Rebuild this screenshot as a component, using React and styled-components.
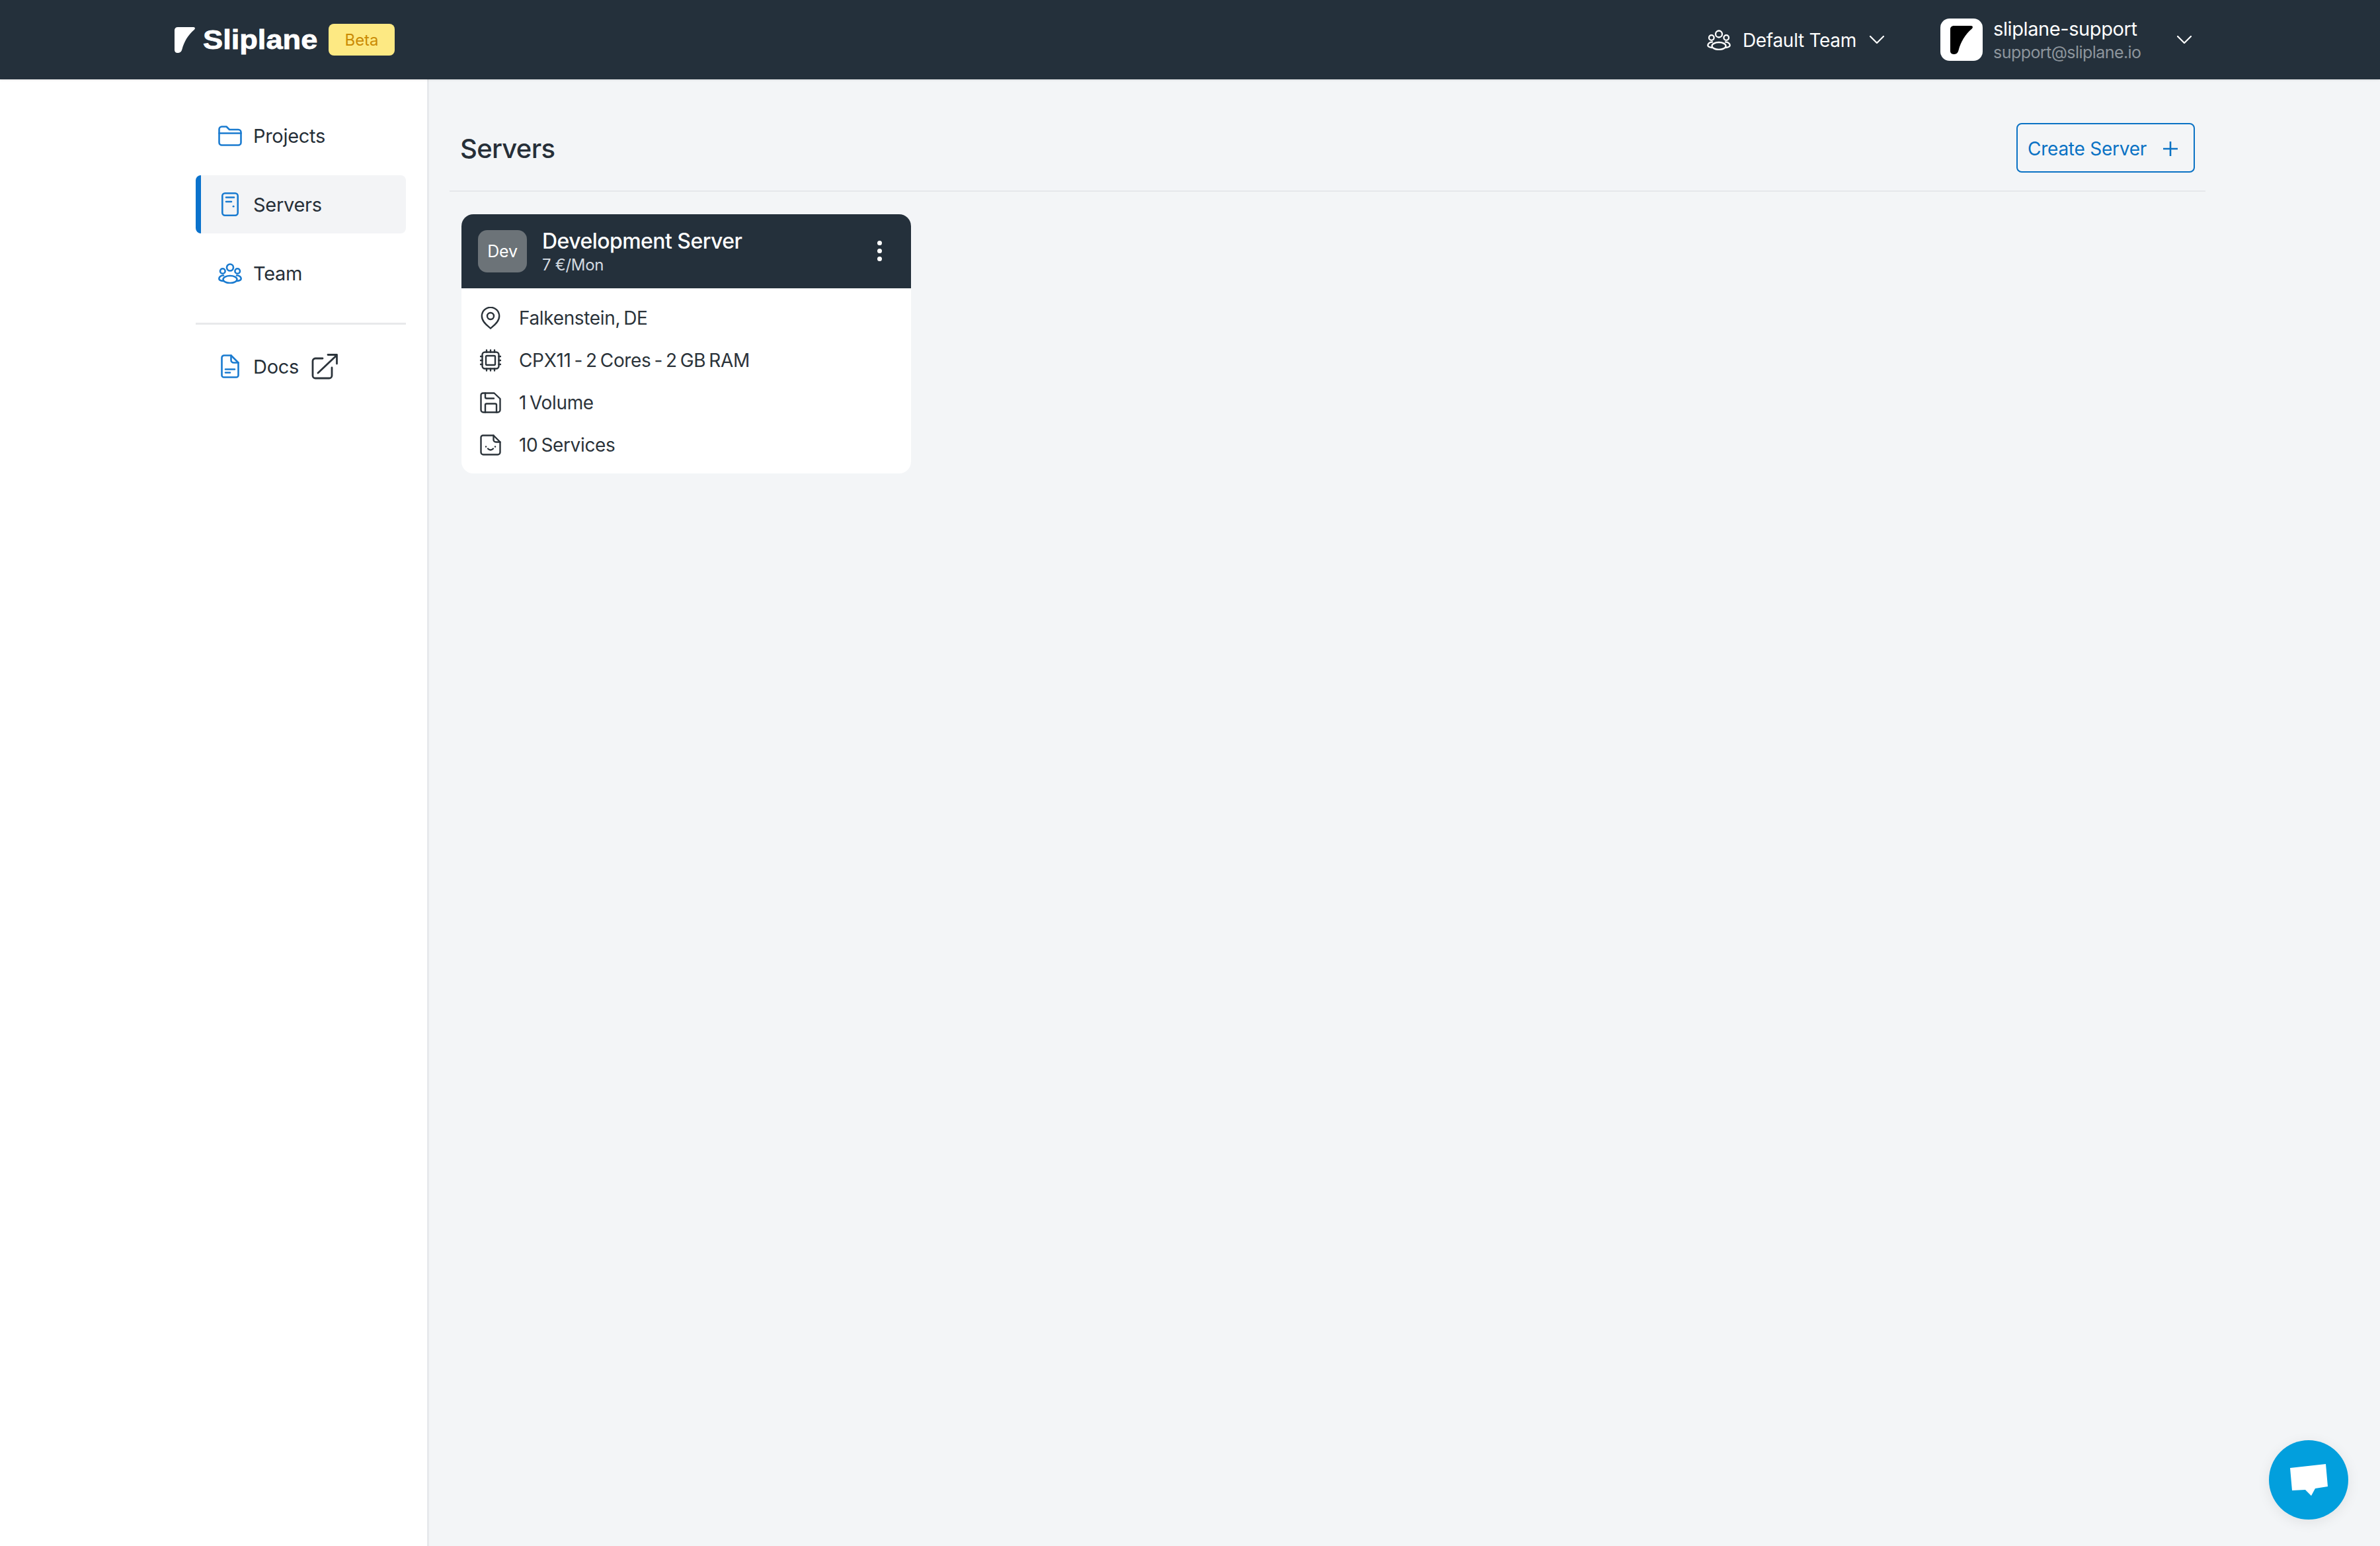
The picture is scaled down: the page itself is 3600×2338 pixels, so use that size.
import React from "react";
import styled, { createGlobalStyle } from "styled-components";

const Global = createGlobalStyle`
  html, body { margin: 0; padding: 0; background: #fff; }
  body { font-family: Inter, "Noto Sans", sans-serif; color: #262f38; }
  * { box-sizing: border-box; }
`;

const Page = styled.div`
  width: 3600px;
  height: 2338px;
  display: flex;
  flex-direction: column;
  overflow: hidden;
  position: relative;
`;

const TopBar = styled.header`
  height: 120px;
  flex: none;
  background: #24303b;
  display: flex;
  align-items: center;
  justify-content: space-between;
  padding: 0 285px 0 264px;
  box-shadow: 0 1px 3px rgba(0, 0, 0, 0.12);
  position: relative;
  z-index: 1;
`;

const Brand = styled.div`
  display: flex;
  align-items: center;
`;

const Wordmark = styled.span`
  margin-left: 12px;
  font-family: "Liberation Sans", Arial, sans-serif;
  font-weight: 700;
  font-size: 40px;
  line-height: 1;
  color: #fff;
  -webkit-text-stroke: 0.8px #fff;
  display: inline-block;
  width: 174px;
  white-space: nowrap;
  transform-origin: left center;
  transform: scaleX(1.13);
`;

const BetaBadge = styled.span`
  margin-left: 16px;
  width: 100px;
  height: 48px;
  border-radius: 8px;
  background: #fde983;
  color: #ca8a04;
  font-size: 24px;
  display: flex;
  align-items: center;
  justify-content: center;
`;

const TopRight = styled.div`
  display: flex;
  align-items: center;
`;

const TeamPicker = styled.div`
  display: flex;
  align-items: center;
  color: #fff;
  font-size: 28px;
  letter-spacing: -0.3px;
`;

const TeamName = styled.span`
  margin: 2px 20px 0 18px;
`;

const Account = styled.div`
  margin-left: 85px;
  display: flex;
  align-items: center;
`;

const AccountAvatar = styled.div`
  width: 64px;
  height: 64px;
  border-radius: 14px;
  background: #fff;
  display: flex;
  align-items: center;
  justify-content: center;
`;

const AccountText = styled.div`
  margin-left: 16px;
  width: 278px;
  display: flex;
  flex-direction: column;
  gap: 3px;
`;

const AccountName = styled.span`
  color: #fff;
  font-size: 29px;
  line-height: 34px;
  letter-spacing: -0.4px;
`;

const AccountMail = styled.span`
  color: #8d959c;
  font-size: 25px;
  line-height: 28px;
  letter-spacing: -0.55px;
  margin-top: 1px;
`;

const Body = styled.div`
  flex: 1;
  display: flex;
  min-height: 0;
`;

const Sidebar = styled.aside`
  width: 649px;
  flex: none;
  background: #fff;
  border-right: 3px solid #e7e9ec;
  padding: 41px 32px 0 296px;
  display: flex;
  flex-direction: column;
`;

const NavItem = styled.div`
  height: 88px;
  margin-bottom: 16px;
  display: flex;
  align-items: center;
  font-size: 29px;
  letter-spacing: -0.3px;
  border-radius: 8px;
  color: #262f38;
  background: ${(p) => (p.$active ? "#f3f4f6" : "transparent")};
  border-left: 8px solid ${(p) => (p.$active ? "#0a72cc" : "transparent")};
`;

const NavIconSlot = styled.span`
  width: 79px;
  padding-left: 26px;
  flex: none;
  display: flex;
  align-items: center;
  justify-content: flex-start;
`;

const NavIcon = styled.svg`
  width: ${(p) => p.$w}px;
  height: ${(p) => p.$h}px;
  margin-left: ${(p) => p.$ml || 0}px;
  fill: none;
  stroke: #1a7bd0;
  stroke-width: 2.6;
  stroke-linecap: round;
  stroke-linejoin: round;
  flex: none;
`;

const NavRule = styled.div`
  height: 3px;
  background: #e8e9eb;
  margin: 15px 0 19px;
`;

const ExternalIcon = styled.svg`
  width: 40px;
  height: 39px;
  margin-left: 19px;
  fill: none;
  stroke: #2c343b;
  stroke-width: 2.8;
  stroke-linecap: round;
  stroke-linejoin: round;
`;

const Main = styled.main`
  flex: 1;
  background: #f3f5f7;
  padding: 66px 264px 0 31px;
`;

const PageHead = styled.div`
  display: flex;
  align-items: center;
  justify-content: space-between;
  padding: 0 16px 27px;
  border-bottom: 2px solid #e5e7eb;
`;

const PageTitle = styled.h1`
  margin: 2px 0 0;
  font-size: 40px;
  font-weight: 500;
  letter-spacing: -0.7px;
  color: #262f38;
`;

const CreateButton = styled.button`
  width: 270px;
  height: 75px;
  padding: 2px 24px 0 15px;
  border: 2px solid #0a72c4;
  border-radius: 8px;
  background: transparent;
  color: #0a72c4;
  font-family: inherit;
  font-size: 28px;
  letter-spacing: -0.25px;
  display: flex;
  align-items: center;
  justify-content: space-between;
`;

const PlusIcon = styled.svg`
  width: 22px;
  height: 22px;
  stroke: #0a72c4;
  stroke-width: 2.6;
  fill: none;
`;

const Card = styled.article`
  width: 680px;
  margin: 34px 0 0 18px;
  border-radius: 18px;
  background: #fff;
  overflow: hidden;
`;

const CardHead = styled.div`
  height: 112px;
  background: #24303b;
  display: flex;
  align-items: center;
  padding: 0 44px 0 25px;
`;

const CardBadge = styled.div`
  width: 74px;
  height: 64px;
  border-radius: 14px;
  background: #6c7378;
  color: #fff;
  font-size: 25px;
  letter-spacing: -0.3px;
  display: flex;
  align-items: center;
  justify-content: center;
  flex: none;
`;

const CardHeading = styled.div`
  margin-left: 23px;
  flex: 1;
  display: flex;
  flex-direction: column;
`;

const CardTitle = styled.span`
  color: #fff;
  font-size: 32px;
  font-weight: 500;
  line-height: 40px;
  letter-spacing: -0.55px;
`;

const CardPrice = styled.span`
  color: #d3dae0;
  font-size: 24px;
  line-height: 30px;
  margin-top: 1px;
  letter-spacing: -0.3px;
`;

const KebabDots = styled.div`
  display: flex;
  flex-direction: column;
  gap: 5px;
  margin-top: -2px;
`;

const Dot = styled.span`
  width: 7px;
  height: 7px;
  border-radius: 50%;
  background: #fff;
`;

const CardBody = styled.div`
  padding: 13px 28px 11px;
  display: flex;
  flex-direction: column;
`;

const SpecRow = styled.div`
  height: 64px;
  display: flex;
  align-items: center;
  font-size: 28px;
  letter-spacing: -0.35px;
  word-spacing: -2.5px;
  color: #2b333a;
`;

const SpecIconSlot = styled.span`
  width: 59px;
  flex: none;
  display: flex;
  align-items: center;
`;

const SpecIcon = styled.svg`
  width: 32px;
  height: 34px;
  fill: none;
  stroke: #2b333a;
  stroke-width: 2.4;
  stroke-linecap: round;
  stroke-linejoin: round;
`;

const ChatBubble = styled.button`
  position: absolute;
  right: 48px;
  bottom: 40px;
  width: 120px;
  height: 120px;
  padding: 0;
  border: none;
  border-radius: 50%;
  background: #029fdd;
  box-shadow: 0 4px 20px rgba(0, 0, 0, 0.08);
  display: flex;
  align-items: center;
  justify-content: center;
`;

const Chevron = ({ ml }) => (
  <svg width="22" height="12" viewBox="0 0 22 12" fill="none" stroke="#fff" strokeWidth="2.2" strokeLinecap="round" strokeLinejoin="round" style={{ marginLeft: ml || 0, flex: "none" }}>
    <path d="M1 1l10 10L21 1" />
  </svg>
);

const LogoMark = ({ color, w, h }) => (
  <svg width={w} height={h} viewBox="0 0 31 39" fill={color} style={{ flex: "none" }}>
    <path d="M5 0H28.5C31 0 31.7 2 30 3.8C20 12.5 14.5 22 11.3 34C10.2 38 7.5 39 4.5 39C1.5 39 0 37 0 34.5V4.5C0 2 2 0 5 0Z" />
  </svg>
);

const TeamGlyph = () => (
  <>
    <circle cx="18" cy="6.5" r="5" />
    <circle cx="6.8" cy="12" r="3.8" />
    <circle cx="29.2" cy="12" r="3.8" />
    <ellipse cx="18" cy="24.5" rx="10.5" ry="5.5" />
    <path d="M8 18.5C4 18.5 1.3 21 1.3 23.5C1.3 25.2 4 26.6 7.6 27" />
    <path d="M28 18.5C32 18.5 34.7 21 34.7 23.5C34.7 25.2 32 26.6 28.4 27" />
  </>
);

export default function App() {
  return (
    <Page>
      <Global />
      <TopBar>
        <Brand>
          <LogoMark color="#fff" w={31} h={39} />
          <Wordmark>Sliplane</Wordmark>
          <BetaBadge>Beta</BetaBadge>
        </Brand>
        <TopRight>
          <TeamPicker>
            <svg width="36" height="31" viewBox="0 0 36 31" fill="none" stroke="#fff" strokeWidth="2.3" strokeLinecap="round" strokeLinejoin="round">
              <TeamGlyph />
            </svg>
            <TeamName>Default Team</TeamName>
            <Chevron />
          </TeamPicker>
          <Account>
            <AccountAvatar>
              <LogoMark color="#000" w={34} h={43} />
            </AccountAvatar>
            <AccountText>
              <AccountName>sliplane-support</AccountName>
              <AccountMail>support@sliplane.io</AccountMail>
            </AccountText>
            <Chevron />
          </Account>
        </TopRight>
      </TopBar>
      <Body>
        <Sidebar>
          <NavItem>
            <NavIconSlot>
              <NavIcon $w={36} $h={31} viewBox="0 0 36 31">
                <path d="M1.5 5.5A4 4 0 0 1 5.5 1.5H12.5L17 6H30.5A4 4 0 0 1 34.5 10V25.5A4 4 0 0 1 30.5 29.5H5.5A4 4 0 0 1 1.5 25.5Z" />
                <path d="M1.5 11.5H34.5" />
              </NavIcon>
            </NavIconSlot>
            Projects
          </NavItem>
          <NavItem $active>
            <NavIconSlot>
              <NavIcon $w={26} $h={36} $ml={5} viewBox="0 0 26 36">
                <rect x="1.3" y="1.3" width="23.4" height="33.4" rx="4" />
                <path d="M7 7.5H19M7 14H15" />
                <path d="M18 21.2h.2" strokeWidth="2.8" />
              </NavIcon>
            </NavIconSlot>
            Servers
          </NavItem>
          <NavItem>
            <NavIconSlot>
              <NavIcon $w={36} $h={31} viewBox="0 0 36 31">
                <TeamGlyph />
              </NavIcon>
            </NavIconSlot>
            Team
          </NavItem>
          <NavRule />
          <NavItem>
            <NavIconSlot>
              <NavIcon $w={28} $h={36} $ml={4} viewBox="0 0 28 36">
                <path d="M1.5 5A3.5 3.5 0 0 1 5 1.5H15.5L26.5 12.5V31.5A3 3 0 0 1 23.5 34.5H4.5A3 3 0 0 1 1.5 31.5Z" />
                <path d="M15.5 1.5V8.5A4 4 0 0 0 19.5 12.5H26.5" />
                <path d="M7 22.5H21M7 27.5H14" />
              </NavIcon>
            </NavIconSlot>
            Docs
            <ExternalIcon viewBox="0 0 40 39">
              <path d="M17 7H6A4 4 0 0 0 2 11V33A4 4 0 0 0 6 37H27A4 4 0 0 0 31 33V21" />
              <path d="M10 29L38.5 2M25 1.5H38.5V15" />
            </ExternalIcon>
          </NavItem>
        </Sidebar>
        <Main>
          <PageHead>
            <PageTitle>Servers</PageTitle>
            <CreateButton>
              Create Server
              <PlusIcon viewBox="0 0 22 22">
                <path d="M11 0V22M0 11H22" />
              </PlusIcon>
            </CreateButton>
          </PageHead>
          <Card>
            <CardHead>
              <CardBadge>Dev</CardBadge>
              <CardHeading>
                <CardTitle>Development Server</CardTitle>
                <CardPrice>7 €/Mon</CardPrice>
              </CardHeading>
              <KebabDots>
                <Dot />
                <Dot />
                <Dot />
              </KebabDots>
            </CardHead>
            <CardBody>
              <SpecRow>
                <SpecIconSlot>
                  <SpecIcon viewBox="0 0 32 34">
                    <path d="M16 32.5C12 29 2.8 23 2.8 14A13.2 13.2 0 0 1 29.2 14C29.2 23 20 29 16 32.5Z" />
                    <circle cx="16" cy="14" r="5" />
                  </SpecIcon>
                </SpecIconSlot>
                Falkenstein, DE
              </SpecRow>
              <SpecRow>
                <SpecIconSlot>
                  <SpecIcon viewBox="0 0 32 34">
                    <rect x="3.5" y="4.5" width="25" height="25" rx="4" />
                    <rect x="9" y="10" width="14" height="14" rx="1.5" />
                    <path d="M10 1.5V4.5M16 1.5V4.5M22 1.5V4.5M10 29.5V32.5M16 29.5V32.5M22 29.5V32.5M.8 11H3.5M.8 17H3.5M.8 23H3.5M28.5 11H31.2M28.5 17H31.2M28.5 23H31.2" />
                  </SpecIcon>
                </SpecIconSlot>
                CPX11 - 2 Cores - 2 GB RAM
              </SpecRow>
              <SpecRow>
                <SpecIconSlot>
                  <SpecIcon viewBox="0 0 32 34">
                    <path d="M4.5 2.5H21.5L30.5 11V28A3.5 3.5 0 0 1 27 31.5H5A3.5 3.5 0 0 1 1.5 28V5.5A3 3 0 0 1 4.5 2.5Z" />
                    <path d="M8 2.5V8.5A2 2 0 0 0 10 10.5H21" />
                    <path d="M8 31.5V20.5A2 2 0 0 1 10 18.5H23A2 2 0 0 1 25 20.5V31.5" />
                  </SpecIcon>
                </SpecIconSlot>
                1 Volume
              </SpecRow>
              <SpecRow>
                <SpecIconSlot>
                  <SpecIcon viewBox="0 0 32 34">
                    <path d="M4.5 2.5H20.5L30.5 12.5V28A3.5 3.5 0 0 1 27 31.5H5A3.5 3.5 0 0 1 1.5 28V5.5A3 3 0 0 1 4.5 2.5Z" />
                    <path d="M20.5 2.5V9A3.5 3.5 0 0 0 24 12.5H30.5" />
                    <path d="M9 19.5h.1M23 19.5h.1" />
                    <path d="M12 22.5Q16 26.5 20 22.5" />
                  </SpecIcon>
                </SpecIconSlot>
                10 Services
              </SpecRow>
            </CardBody>
          </Card>
        </Main>
      </Body>
      <ChatBubble aria-label="Chat">
        <svg width="57" height="48" viewBox="0 0 57 48" fill="#fff">
          <polygon points="0,6 54,0 57,34 38,37 32,48 23,39 3,40" />
        </svg>
      </ChatBubble>
    </Page>
  );
}
